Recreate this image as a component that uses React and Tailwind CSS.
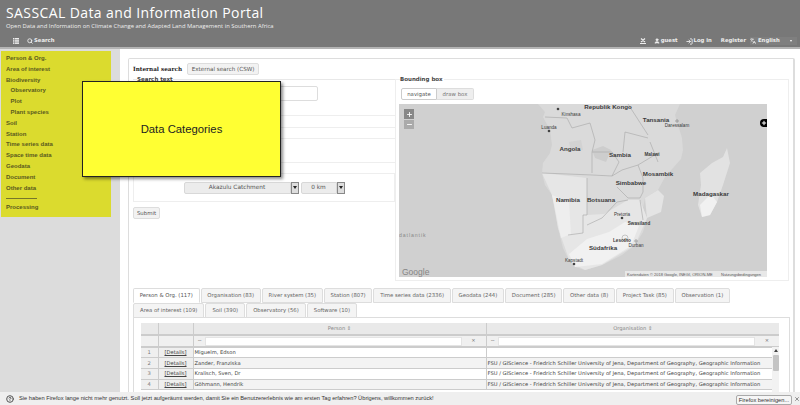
import { Search, User, LogIn, Plus, Minus, X, CircleHelp, Languages } from "lucide-react";

const sideItems = [
  ["Person & Org.", false],
  ["Area of interest", false],
  ["Biodiversity", false],
  ["Observatory", true],
  ["Plot", true],
  ["Plant species", true],
  ["Soil", false],
  ["Station", false],
  ["Time series data", false],
  ["Space time data", false],
  ["Geodata", false],
  ["Document", false],
  ["Other data", false],
];

const tabsRow1 = [
  "Person & Org. (117)",
  "Organisation (83)",
  "River system (35)",
  "Station (807)",
  "Time series data (2336)",
  "Geodata (244)",
  "Document (285)",
  "Other data (8)",
  "Project Task (85)",
  "Observation (1)",
];
const tabsRow2 = ["Area of interest (109)", "Soil (390)", "Observatory (56)", "Software (10)"];

const fsu = "FSU / GIScience - Friedrich Schiller University of Jena, Department of Geography, Geographic Information";
const people = [
  ["1", "Miguelm, Edson", ""],
  ["2", "Zander, Franziska", fsu],
  ["3", "Kralisch, Sven, Dr", fsu],
  ["4", "Göhmann, Hendrik", fsu],
];

function MapDrawing() {
  const labels = [
    ["Republik Kongo", 209, 5, 6.2, true],
    ["Kinshasa", 172, 12, 4.6, false],
    ["Luanda", 150, 25, 4.6, false],
    ["Tansania", 257, 18, 6.2, true],
    ["Daressalam", 278, 23, 4.6, false],
    ["Angola", 171, 47, 6.2, true],
    ["Sambia", 221, 53, 6.2, true],
    ["Malawi", 253, 52, 4.6, true],
    ["Mosambik", 259, 72, 6.2, true],
    ["Simbabwe", 232, 81, 6.2, true],
    ["Madagaskar", 312, 92, 6.2, true],
    ["Namibia", 169, 98, 6.2, true],
    ["Botsuana", 202, 98, 6.2, true],
    ["Pretoria", 223, 112, 4.6, false],
    ["Swasiland", 240, 121, 4.6, true],
    ["Lesotho", 223, 138, 4.6, true],
    ["Durban", 237, 143, 4.6, false],
    ["Südafrika", 204, 146, 6.2, true],
    ["Kapstadt", 175, 158, 4.6, false],
  ];
  return (
    <svg width="368" height="173" viewBox="0 0 368 173" className="block">
      <rect width="368" height="173" fill="#d0d0d0" />
      {/* mainland */}
      <path
        d="M139 0L146 8L144 13L151 26L153 41L151 49L144 59L143 69L146 81L153 91L156 104L159 124L164 144L171 158L176 163L186 166L203 161L223 151L236 141L244 128L248 114L244 104L246 94L259 86L266 73L282 55L284 46L283 34L279 21L276 11L281 0Z"
        fill="#dadada"
      />
      <path d="M143 69L188 74L188 111L205 110L229 96L241 96L248 114L236 141L203 161L186 166L171 158L159 124L153 91Z" fill="#e6e6e6" />
      <path d="M176 163L170 150L188 135L210 128L226 118L240 122L232 142L203 160Z" fill="#f1f1f1" />
      <path d="M153 91L170 98L172 130L162 134L156 104Z" fill="#eeeeee" />
      <path d="M259 86L246 94L248 114L262 108L265 92Z" fill="#e4e4e4" />
      <path d="M193 46L204 42L212 46L207 58L196 54Z" fill="#cdcdcd" />
      <path d="M170 38L182 36L184 46L172 47Z" fill="#d2d2d2" />
      {/* Madagascar */}
      <path
        d="M328 44L331 59L324 81L318 98L311 111L303 113L299 101L302 81L301 69L313 59L324 53Z"
        fill="#e2e2e2"
      />
      <path d="M311 111L303 113L301 101L312 90L318 98Z" fill="#f1f1f1" />
      <g fill="none" stroke="#a6a6a6" strokeWidth="0.6">
        <path d="M143 69L169 70L193 71L213 72" />
        <path d="M193 48L193 69M193 48L213 48L220 58L213 72" />
        <path d="M213 72L223 66L239 61L259 49" />
        <path d="M239 61L244 74L244 88L241 94" />
        <path d="M218 83L229 94L241 94" />
        <path d="M188 74L188 111L184 111L184 129L169 131" />
        <path d="M188 121L203 114L218 98L229 96" />
        <path d="M241 96L244 116" />
        <path d="M251 38L259 58" />
        <path d="M229 0L249 31M249 34L226 28L224 48" />
        <path d="M146 13L168 14L173 24L191 19L196 36L193 48" />
        <circle cx="226" cy="134" r="3" />
      </g>
      <g fontFamily="'Liberation Sans', sans-serif" textAnchor="middle" fill="#3a3a3a">
        {labels.map(([name, x, y, size, bold]) => (
          <text key={name} x={x} y={y} fontSize={size} fontWeight={bold ? 700 : 400}>
            {name}
          </text>
        ))}
      </g>
      <text x="0" y="133" fontSize="5.2" fill="#8a8a8a" letterSpacing="0.9" fontFamily="'Liberation Sans', sans-serif">
        datlantik
      </text>
      <circle cx="159" cy="5" r="1.3" fill="#444" />
      <circle cx="150" cy="27" r="1.3" fill="#444" />
      <circle cx="223" cy="114" r="1.3" fill="#444" />
      <circle cx="175" cy="160" r="1.3" fill="#444" />
      <circle cx="278" cy="17" r="1.2" fill="none" stroke="#666" strokeWidth="0.5" />
      <circle cx="237" cy="137" r="1.2" fill="none" stroke="#666" strokeWidth="0.5" />
      <rect x="226" y="167" width="142" height="6" fill="#eeeeee" opacity="0.8" />
      <text x="228" y="172" fontSize="4" fill="#555" fontFamily="'Liberation Sans', sans-serif">
        Kartendaten © 2018 Google, INEGI, ORION-ME
      </text>
      <text x="322" y="172" fontSize="4" fill="#555" fontFamily="'Liberation Sans', sans-serif">
        Nutzungsbedingungen
      </text>
      <text x="3" y="171" fontSize="8.5" fill="#858585" fontFamily="'Liberation Sans', sans-serif">
        Google
      </text>
    </svg>
  );
}

function SelectArrow() {
  return (
    <span className="w-[8px] h-[12px] flex items-center justify-center bg-[#dddddd] border border-[#888888]">
      <span className="border-x-[2px] border-t-[3px] border-x-transparent border-t-[#222]" />
    </span>
  );
}

export default function App() {
  return (
    <div className="relative w-[800px] h-[405px] overflow-hidden bg-white text-[#555] font-['DejaVu_Sans',sans-serif]">
      {/* header */}
      <header className="h-[49px] bg-[#787878] text-white border-b-2 border-[#b4b4b4] px-[6px] flex flex-col">
        <h1 className="text-[14px] leading-[18px] mt-[4px] tracking-[0.4px] font-['Open_Sans',sans-serif]">SASSCAL Data and Information Portal</h1>
        <p className="text-[5.85px] leading-[10px] -mt-[1px] text-[#eeeeee] font-['Open_Sans',sans-serif]">
          Open Data and Information on Climate Change and Adapted Land Management in Southern Africa
        </p>
        <nav className="mt-[5px] -mr-[3px] flex items-center text-[5.3px] font-bold text-[#eeeeee] h-[10px]">
          <svg width="6" height="6" viewBox="0 0 6 6" fill="currentColor" className="ml-[7px] mr-[8px]">
            <rect width="1.5" height="1.5" />
            <rect x="2" width="4" height="1.5" />
            <rect y="2.2" width="1.5" height="1.5" />
            <rect x="2" y="2.2" width="4" height="1.5" />
            <rect y="4.4" width="1.5" height="1.5" />
            <rect x="2" y="4.4" width="4" height="1.5" />
          </svg>
          <Search size={6} strokeWidth={3.5} className="mr-[1px]" />
          <span>Search</span>
          <div className="ml-auto flex items-center">
            <svg width="6" height="6" viewBox="0 0 6 6" className="mr-[8px]" stroke="currentColor" strokeWidth="1.2" fill="none">
              <path d="M1 0.5L5 4M5 0.5L1 4M0 5.5H6" />
            </svg>
            <User size={6} strokeWidth={3} fill="currentColor" className="mr-[1px]" />
            <span className="mr-[8px]">guest</span>
            <LogIn size={7} strokeWidth={3} className="mr-[1px]" />
            <span className="mr-[9px]">Log in</span>
            <span className="mr-[4px]">Register</span>
            <span className="w-[47px] h-[8px] flex items-center bg-[#7f7f7f]">
              <Languages size={6} strokeWidth={2.5} className="mr-[2px]" />
              <span>English</span>
              <span className="ml-auto mr-[5px] border-x-[1.5px] border-t-[2px] border-x-transparent border-t-white" />
            </span>
          </div>
        </nav>
      </header>

      <div className="flex h-[356px]">
        {/* sidebar */}
        <aside className="w-[120px] shrink-0 bg-[#dcdcdc] pt-[2px] pl-[1px]">
          <ul className="w-[110px] h-[166px] bg-[#dbdb2e] px-[5px] pt-[2px] text-[6px] font-bold text-[#5a5a1e] font-['Liberation_Sans',sans-serif]">
            {sideItems.map(([label, indent]) => (
              <li key={label} className={`h-[10.8px] leading-[10.8px] ${indent ? "pl-[4.5px]" : ""}`}>
                {label}
              </li>
            ))}
            <li className="mt-[1px] border-b border-[#77772a] w-[31px] h-[5px]" />
            <li className="mt-[3px] h-[10px] leading-[10px]">Processing</li>
          </ul>
        </aside>

        {/* main */}
        <main className="flex-1 min-w-0 pl-[8px] pr-[5px] pt-[9px]">
          <div className="h-[347px] border-l border-t border-r-[2px] border-[#dddddd] rounded-t-[2px] pl-[4px] pr-[3px] pt-[4px]">
            <div className="flex items-center h-[12px]">
              <span className="text-[5.7px] font-bold text-[#222] font-['DejaVu_Serif',serif]">Internal search</span>
              <span className="ml-[5px] h-[12px] w-[72px] flex items-center justify-center border border-[#dddddd] rounded-[2px] bg-[#f2f2f2] text-[5.6px]">
                External search (CSW)
              </span>
            </div>

            <div className="flex mt-[4px]">
              {/* left form */}
              <div className="w-[262px] shrink-0">
                <div className="relative border-t border-[#e8e8e8] h-[36px]">
                  <span className="absolute left-[4px] -top-[5px] bg-white text-[5.5px] font-bold leading-[8px] text-[#444]">Search text</span>
                  <div className="absolute left-[120px] top-[6px] w-[65px] h-[15px] border border-[#dddddd] rounded-[2px]" />
                </div>
                <div className="border-t border-[#eeeeee] h-[12px]" />
                <div className="border-t border-[#eeeeee] h-[11px]" />
                <div className="border-y border-[#eeeeee] h-[25px]" />
                <div className="mt-[10px] border border-[#eeeeee] h-[29px] flex items-center justify-center">
                  <div className="flex items-center text-[5.8px]">
                    <span className="w-[107px] h-[12px] flex items-center justify-center bg-[#ececec] border border-[#d8d8d8] rounded-l-[2px]">Akazulu Catchment</span>
                    <SelectArrow />
                    <span className="ml-[2px] w-[36px] h-[12px] flex items-center justify-center bg-[#ececec] border border-[#d8d8d8] rounded-l-[2px]">0 km</span>
                    <SelectArrow />
                  </div>
                </div>
                <span className="mt-[5px] w-[27px] h-[12px] flex items-center justify-center border border-[#dddddd] rounded-[2px] bg-[#f2f2f2] text-[5.4px]">Submit</span>
              </div>

              {/* bounding box */}
              <div className="relative w-[394px] h-[202px] border border-[#eeeeee] pl-[3px] pt-[8px]">
                <span className="absolute left-[4px] -top-[5px] bg-white pr-[1px] text-[5.5px] font-bold leading-[8px] text-[#444]">Bounding box</span>
                <div className="flex text-[5.4px] h-[12px] ml-[2px]">
                  <span className="w-[36px] flex items-center justify-center border border-[#cccccc] rounded-l-[2px] bg-white">navigate</span>
                  <span className="w-[37px] flex items-center justify-center border border-[#dddddd] border-l-0 rounded-r-[2px] bg-[#eeeeee] text-[#777]">draw box</span>
                </div>
                <div className="relative mt-[4px] w-[368px] h-[173px]">
                  <MapDrawing />
                  <div className="absolute left-[5px] top-[5px] flex flex-col gap-[1px] text-white">
                    <span className="w-[10px] h-[10px] bg-[#888] flex items-center justify-center"><Plus size={7} strokeWidth={3} /></span>
                    <span className="w-[10px] h-[9px] bg-[#aaa] flex items-center justify-center"><Minus size={7} strokeWidth={3} /></span>
                  </div>
                  <span className="absolute right-0 top-[15px] w-[7px] h-[8px] bg-black rounded-l-full flex items-center justify-center text-white overflow-hidden">
                    <Plus size={6} strokeWidth={4} />
                  </span>
                </div>
              </div>
            </div>

            {/* tabs */}
            <div className="mt-[7px] text-[5.35px] text-[#666]">
              <div className="flex gap-[1px] h-[15px]">
                {tabsRow1.map((t, i) => (
                  <span key={t} className={`px-[5.75px] whitespace-nowrap flex items-center border border-[#dddddd] rounded-t-[2px] ${i === 0 ? "bg-white border-b-white text-[#555]" : "bg-[#f4f4f4]"}`}>{t}</span>
                ))}
              </div>
              <div className="flex gap-[1px] h-[15px]">
                {tabsRow2.map((t) => (
                  <span key={t} className="px-[6px] whitespace-nowrap flex items-center border border-[#dddddd] rounded-t-[2px] bg-[#f4f4f4]">{t}</span>
                ))}
              </div>
              <div className="-mt-[1px] h-[88px] border border-[#dddddd] pl-[7px] pt-[5px]">
                <table className="w-[638px] table-fixed border-collapse text-[5.2px]">
                  <colgroup>
                    <col className="w-[17px]" />
                    <col className="w-[35px]" />
                    <col className="w-[293px]" />
                    <col />
                  </colgroup>
                  <thead>
                    <tr className="h-[12px] bg-[#e9e9e9] text-[#888] border-b-2 border-[#cccccc]">
                      <th className="font-normal border-r border-[#cccccc]" />
                      <th className="font-normal border-r border-[#cccccc]" />
                      <th className="font-normal border-r border-[#cccccc]">Person ⇕</th>
                      <th className="font-normal">Organisation ⇕</th>
                    </tr>
                    <tr className="h-[12px] bg-[#f0f0f0] border-b-2 border-[#cccccc]">
                      <td className="border-r border-[#cccccc]" />
                      <td className="border-r border-[#cccccc]" />
                      <td className="border-r border-[#cccccc]">
                        <div className="flex items-center pl-[4px] text-[#777]">
                          <span className="w-[7px]">~</span>
                          <span className="flex-1 h-[9px] bg-white border border-[#e4e4e4]" />
                          <span className="w-[24px] text-center">×</span>
                        </div>
                      </td>
                      <td>
                        <div className="flex items-center pl-[4px] text-[#777]">
                          <span className="w-[7px]">~</span>
                          <span className="flex-1 h-[9px] bg-white border border-[#e4e4e4]" />
                          <span className="w-[24px] text-center">×</span>
                        </div>
                      </td>
                    </tr>
                  </thead>
                  <tbody className="text-[#444]">
                    {people.map(([n, name, org], i) => (
                      <tr key={n} className={`h-[10.7px] leading-[9px] border-b border-[#cccccc] ${i % 2 === 1 ? "bg-[#f3f3f3]" : "bg-white"}`}>
                        <td className="text-center text-[#777] bg-[#efefef] border-r border-[#cccccc]">{n}</td>
                        <td className="text-center bg-[#efefef] border-r border-[#cccccc] underline">[Details]</td>
                        <td className="pl-[1px] border-r border-[#cccccc]">{name}</td>
                        <td className="pl-[1px] whitespace-nowrap">{org}</td>
                      </tr>
                    ))}
                  </tbody>
                </table>
              </div>
            </div>
          </div>
        </main>
      </div>

      {/* scrollbar of the table */}
      <div className="absolute left-[772px] top-[347px] w-[7px] h-[46px] bg-[#f2f2f2] flex flex-col items-center">
        <span className="mt-[2px] border-x-[2px] border-b-[3px] border-x-transparent border-b-[#444]" />
        <span className="mt-[3px] w-[6px] h-[16px] bg-[#c4c4c4] rounded-[1px]" />
      </div>

      {/* data categories note */}
      <div className="absolute left-[82px] top-[81px] w-[199px] h-[96px] bg-[#ffff33] border border-[#222] shadow-[2px_2px_3px_rgba(0,0,0,0.45)] flex items-center justify-center text-[11.3px] text-[#222] font-['Liberation_Sans',sans-serif]">
        Data Categories
      </div>

      {/* firefox notification */}
      <div className="absolute left-0 right-0 bottom-0 h-[13px] bg-[#efefef] flex items-center text-[5.7px] text-[#333] font-['Liberation_Sans',sans-serif]">
        <CircleHelp size={8} strokeWidth={3} className="ml-[6px] mr-[5px] text-[#555]" />
        <span>Sie haben Firefox lange nicht mehr genutzt. Soll jetzt aufgeräumt werden, damit Sie ein Benutzererlebnis wie am ersten Tag erfahren? Übrigens, willkommen zurück!</span>
        <span className="ml-auto mt-[3px] h-[10px] w-[56px] whitespace-nowrap flex items-center justify-center bg-[#f6f6f6] border border-[#aaaaaa] rounded-[2px]">Firefox bereinigen...</span>
        <X size={6} className="ml-[2px] mr-[0px]" />
      </div>
    </div>
  );
}
